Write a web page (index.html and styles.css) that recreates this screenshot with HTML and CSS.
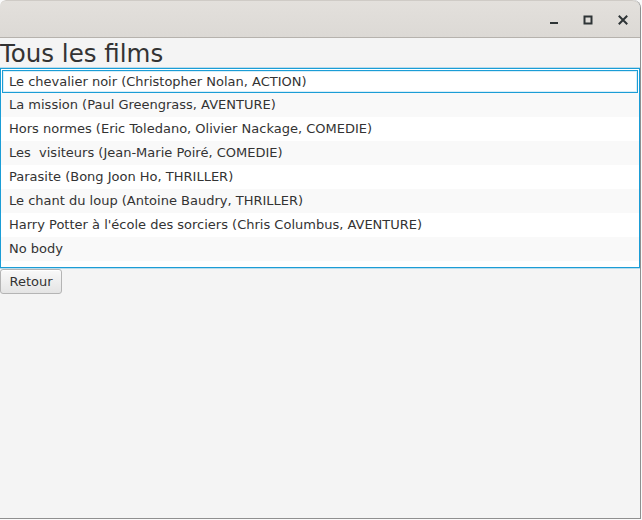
FILE: index.html
```html
<!DOCTYPE html>
<html lang="fr">
<head>
<meta charset="utf-8">
<title>Tous les films</title>
<link rel="stylesheet" href="styles.css">
</head>
<body>
<div class="window">
  <header class="titlebar">
    <div class="controls">
      <span class="ctl ctl-min" aria-label="Réduire">
        <svg width="10" height="10" viewBox="0 0 10 10"><rect x="1" y="7" width="8" height="2" fill="#2e3436"/></svg>
      </span>
      <span class="ctl ctl-max" aria-label="Agrandir">
        <svg width="10" height="10" viewBox="0 0 10 10"><rect x="1.5" y="1.5" width="7" height="7" fill="none" stroke="#2e3436" stroke-width="2"/></svg>
      </span>
      <span class="ctl ctl-close" aria-label="Fermer">
        <svg width="10" height="10" viewBox="0 0 10 10"><path d="M1.5 1.5 L8.5 8.5 M8.5 1.5 L1.5 8.5" stroke="#2e3436" stroke-width="2" stroke-linecap="square"/></svg>
      </span>
    </div>
  </header>
  <main class="content">
    <h1 class="title">Tous les films</h1>
    <ul class="list">
      <li class="row focused">Le chevalier noir (Christopher Nolan, ACTION)</li>
      <li class="row">La mission (Paul Greengrass, AVENTURE)</li>
      <li class="row">Hors normes (Eric Toledano, Olivier Nackage, COMEDIE)</li>
      <li class="row">Les&nbsp; visiteurs (Jean-Marie Poiré, COMEDIE)</li>
      <li class="row">Parasite (Bong Joon Ho, THRILLER)</li>
      <li class="row">Le chant du loup (Antoine Baudry, THRILLER)</li>
      <li class="row">Harry Potter à l'école des sorciers (Chris Columbus, AVENTURE)</li>
      <li class="row">No body</li>
    </ul>
    <button class="btn" type="button">Retour</button>
  </main>
</div>
</body>
</html>
```
FILE: styles.css
```css
html, body {
  margin: 0;
  padding: 0;
  background: #fafafa;
}
body {
  width: 642px;
  height: 520px;
  overflow: hidden;
  font-family: "DejaVu Sans", sans-serif;
}
.window {
  width: 640px;
  height: 518px;
  border-right: 1px solid #8f8f8f;
  border-bottom: 1px solid #8f8f8f;
  display: flex;
  flex-direction: column;
  background: #f4f4f4;
  border-radius: 6px 8px 0 0;
  overflow: hidden;
}
.titlebar {
  flex: none;
  background: linear-gradient(#e3e0dc, #dcd9d5);
  border-top: 1px solid #cfcbc6;
  border-bottom: 1px solid #b6b2ad;
  box-sizing: border-box;
  height: 38px;
  display: flex;
  justify-content: flex-end;
  align-items: center;
  border-radius: 6px 8px 0 0;
}
.controls {
  display: flex;
  padding-right: 12px;
  padding-top: 2px;
}
.ctl {
  width: 10px;
  height: 10px;
  display: block;
}
.ctl-max { margin-left: 24px; }
.ctl-close { margin-left: 25px; }
.ctl svg { display: block; }
.content {
  flex: 1;
  display: flex;
  flex-direction: column;
  align-items: flex-start;
  padding-top: 1px;
}
.title {
  margin: 0;
  font-weight: normal;
  font-size: 24.5px;
  line-height: 29px;
  color: #333333;
}
.list {
  list-style: none;
  margin: 0;
  padding: 0;
  width: 640px;
  height: 200px;
  box-sizing: border-box;
  border: 1px solid #1b9dd6;
  box-shadow: 0 0 0 1px rgba(27, 157, 214, 0.28);
  background: #ffffff;
  overflow: hidden;
}
.row {
  height: 24px;
  line-height: 24px;
  padding-left: 8px;
  font-size: 13px;
  color: #333333;
  white-space: nowrap;
  background: #ffffff;
  box-sizing: border-box;
}
.row:nth-child(even) {
  background: #f9f9f9;
}
.row.focused {
  border: 1px solid #1b9dd6;
  box-shadow: inset 0 0 0 1px #d8eef8;
  margin: 1px 1px 0 1px;
  line-height: 22px;
  height: 23px;
  padding-left: 6px;
}
.btn {
  margin-top: 1px;
  height: 25px;
  width: 62px;
  padding: 0;
  font-family: "DejaVu Sans", sans-serif;
  font-size: 13px;
  color: #333333;
  border: 1px solid #b4b4b4;
  border-radius: 3px;
  background: linear-gradient(#f9f9f9, #e4e4e4);
  box-shadow: inset 0 1px 0 #ffffff;
}
```
